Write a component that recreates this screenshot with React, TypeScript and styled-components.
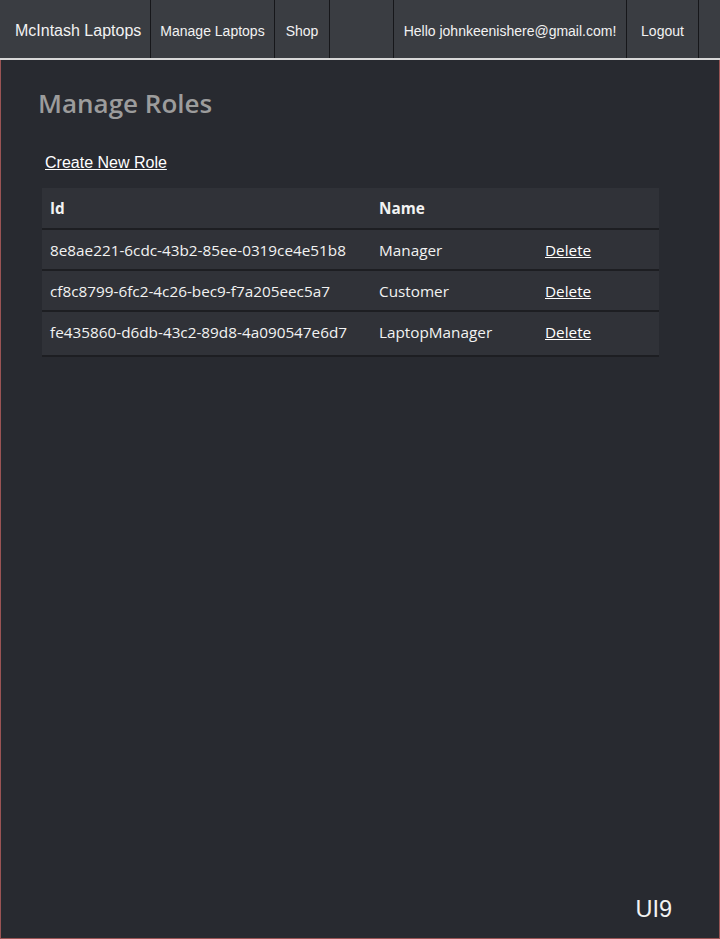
import React from "react";
import styled, { createGlobalStyle } from "styled-components";

const Global = createGlobalStyle`
  html, body { margin: 0; padding: 0; background: #282a30; }
  * { box-sizing: border-box; }
`;

const Frame = styled.div`
  width: 720px;
  height: 939px;
  display: flex;
  flex-direction: column;
  background: #282a30;
`;

const Nav = styled.nav`
  height: 60px;
  display: flex;
  align-items: stretch;
  background: #3a3d42;
  border-bottom: 2px solid #d8d8d8;
  font-family: "Liberation Sans", Arial, sans-serif;
  color: #f2f2f2;
`;

const NavCell = styled.a<{ $w?: number; $size?: number; $grow?: boolean; $start?: boolean; $plain?: boolean }>`
  display: flex;
  align-items: center;
  justify-content: ${(p) => (p.$start ? "flex-start" : "center")};
  padding-left: ${(p) => (p.$start ? "15px" : "0")};
  width: ${(p) => (p.$w ? `${p.$w}px` : "auto")};
  flex: ${(p) => (p.$grow ? "1" : "none")};
  font-size: ${(p) => p.$size ?? 14}px;
  color: #f2f2f2;
  text-decoration: none;
  border-right: ${(p) => (p.$plain ? "none" : "1px solid #16171a")};
  white-space: nowrap;
  padding-top: 3px;
`;

const Body = styled.main`
  flex: 1;
  border: 1px solid #9a5454;
  border-top: none;
  padding: 26px 60px 0 37px;
  display: flex;
  flex-direction: column;
  position: relative;
`;

const Title = styled.h1`
  margin: 0;
  font-family: "Open Sans", "Noto Sans", sans-serif;
  font-weight: 600;
  font-size: 26px;
  color: #9c9c9c;
  line-height: 34px;
`;

const CreateLink = styled.a`
  margin: 34px 0 0 7px;
  font-family: "Liberation Sans", Arial, sans-serif;
  font-size: 16px;
  color: #ffffff;
  text-decoration: underline;
  line-height: 18px;
  align-self: flex-start;
`;

const Table = styled.table`
  margin: 16px 0 0 4px;
  width: 617px;
  border-collapse: collapse;
  background: #303238;
  font-family: "Open Sans", "Noto Sans", sans-serif;
  font-size: 15.3px;
  color: #f2f2f2;
`;

const Th = styled.th<{ $w?: number }>`
  text-align: left;
  font-weight: 700;
  height: 41px;
  padding: 0 8px;
  width: ${(p) => (p.$w ? `${p.$w}px` : "auto")};
  border-bottom: 2px solid #1d1e22;
`;

const Td = styled.td<{ $last?: boolean }>`
  height: ${(p) => (p.$last ? 45 : 41)}px;
  padding: ${(p) => (p.$last ? "0 8px 4px" : "0 8px")};
  border-bottom: 2px solid #1d1e22;
  white-space: nowrap;
`;

const DeleteLink = styled.a`
  color: #ffffff;
  text-decoration: underline;
`;

const Badge = styled.div`
  position: absolute;
  right: 47px;
  bottom: 15px;
  font-family: "Liberation Sans", Arial, sans-serif;
  font-size: 23.5px;
  color: #f2f2f2;
`;

const roles = [
  { id: "8e8ae221-6cdc-43b2-85ee-0319ce4e51b8", name: "Manager" },
  { id: "cf8c8799-6fc2-4c26-bec9-f7a205eec5a7", name: "Customer" },
  { id: "fe435860-d6db-43c2-89d8-4a090547e6d7", name: "LaptopManager" },
];

export default function App() {
  return (
    <Frame>
      <Global />
      <Nav>
        <NavCell $w={151} $size={16} $start>McIntash Laptops</NavCell>
        <NavCell $w={124}>Manage Laptops</NavCell>
        <NavCell $w={55}>Shop</NavCell>
        <NavCell $grow />
        <NavCell $w={233}>Hello johnkeenishere@gmail.com!</NavCell>
        <NavCell $w={72}>Logout</NavCell>
        <NavCell $w={21} $plain />
      </Nav>
      <Body>
        <Title>Manage Roles</Title>
        <CreateLink href="#">Create New Role</CreateLink>
        <Table>
          <thead>
            <tr>
              <Th $w={329}>Id</Th>
              <Th $w={166}>Name</Th>
              <Th />
            </tr>
          </thead>
          <tbody>
            {roles.map((r, i) => {
              const last = i === roles.length - 1;
              return (
                <tr key={r.id}>
                  <Td $last={last}>{r.id}</Td>
                  <Td $last={last}>{r.name}</Td>
                  <Td $last={last}>
                    <DeleteLink href="#">Delete</DeleteLink>
                  </Td>
                </tr>
              );
            })}
          </tbody>
        </Table>
        <Badge>UI9</Badge>
      </Body>
    </Frame>
  );
}
